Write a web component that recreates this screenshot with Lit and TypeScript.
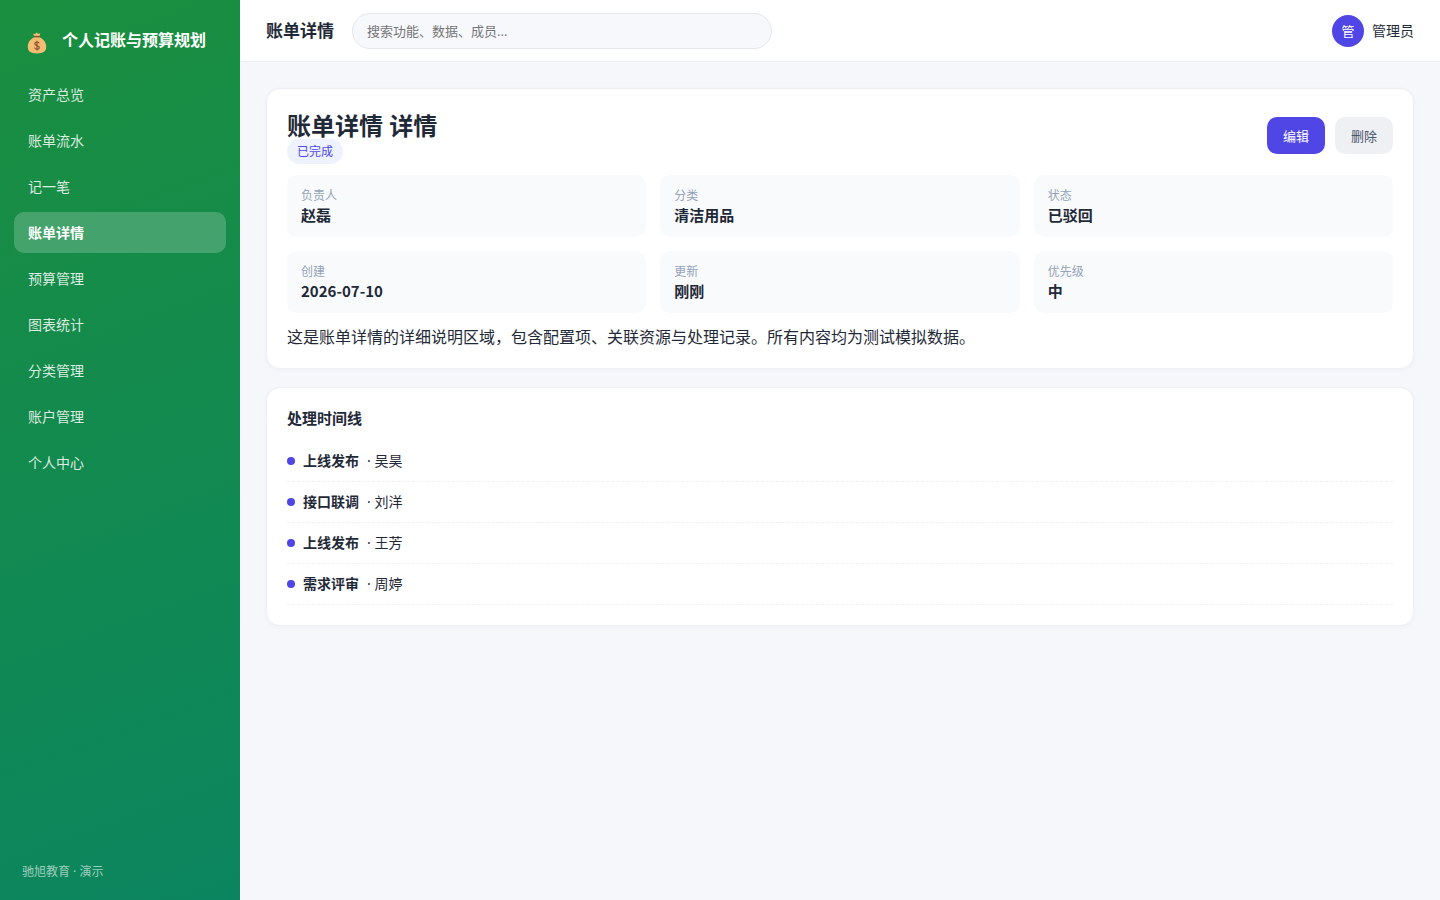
import { LitElement, html, css } from "lit";
import { customElement, state } from "lit/decorators.js";

const NAV = ["资产总览", "账单流水", "记一笔", "账单详情", "预算管理", "图表统计", "分类管理", "账户管理", "个人中心"];

const FIELDS = [
  { label: "负责人", value: "赵磊" },
  { label: "分类", value: "清洁用品" },
  { label: "状态", value: "已驳回" },
  { label: "创建", value: "2026-07-10" },
  { label: "更新", value: "刚刚" },
  { label: "优先级", value: "中" },
];

const TIMELINE = [
  { step: "上线发布", who: "吴昊" },
  { step: "接口联调", who: "刘洋" },
  { step: "上线发布", who: "王芳" },
  { step: "需求评审", who: "周婷" },
];

@customElement("app-root")
export class AppRoot extends LitElement {
  @state() private active = "账单详情";

  static styles = css`
    :host {
      display: flex;
      min-height: 100vh;
      background: #f5f7fb;
      color: #1f2937;
      font: 14px/20px "Noto Sans", "Noto Sans CJK SC", sans-serif;
    }
    * {
      box-sizing: border-box;
    }
    h1, h2, h3, p, dl, dd, ul {
      margin: 0;
      padding: 0;
    }
    .sidebar {
      flex: 0 0 240px;
      display: flex;
      flex-direction: column;
      padding: 20px 14px;
      color: #fff;
      background: linear-gradient(160deg, #1a8f3f, #0b855f);
    }
    .brand {
      display: flex;
      align-items: center;
      gap: 15px;
      height: 40px;
      margin-bottom: 14px;
      padding: 0 13px;
      font-size: 16px;
      font-weight: 700;
      white-space: nowrap;
    }
    .logo {
      flex: none;
      width: 20px;
      height: 22px;
      margin-top: 5px;
    }
    .nav {
      display: flex;
      flex-direction: column;
      gap: 5px;
    }
    .link {
      height: 41px;
      padding: 0 14px;
      border-radius: 10px;
      line-height: 42px;
      color: rgba(255, 255, 255, 0.85);
      text-decoration: none;
    }
    .link.active {
      background: rgba(255, 255, 255, 0.2);
      color: #fff;
      font-weight: 700;
    }
    .foot {
      margin-top: auto;
      padding: 0 8px;
      font-size: 12px;
      line-height: 16px;
      color: rgba(255, 255, 255, 0.6);
    }
    .page {
      flex: 1;
      min-width: 0;
    }
    .topbar {
      display: flex;
      align-items: center;
      gap: 18px;
      height: 62px;
      padding: 0 26px;
      background: #fff;
      border-bottom: 1px solid #eef0f4;
    }
    .topbar h1 {
      font-size: 17px;
      line-height: 24px;
      white-space: nowrap;
    }
    .search {
      flex: 0 1 420px;
      min-width: 0;
      height: 36px;
      padding: 0 14px;
      border: 1px solid #e5e7ef;
      border-radius: 18px;
      background: #f7f8fc;
      font: inherit;
      font-size: 13px;
      color: inherit;
    }
    .search::placeholder {
      color: #757575;
    }
    .user {
      display: flex;
      align-items: center;
      gap: 8px;
      margin-left: auto;
      white-space: nowrap;
    }
    .avatar {
      width: 32px;
      height: 32px;
      border-radius: 50%;
      background: #4f46e5;
      color: #fff;
      font-size: 13px;
      line-height: 32px;
      text-align: center;
    }
    .content {
      display: flex;
      flex-direction: column;
      gap: 18px;
      padding: 26px;
    }
    .card {
      padding: 20px;
      border: 1px solid #eef0f5;
      border-radius: 14px;
      background: #fff;
      box-shadow: 0 1px 4px rgba(30, 40, 80, 0.04);
    }
    .head {
      display: flex;
      align-items: center;
      justify-content: space-between;
      margin-bottom: 13px;
    }
    .head h2 {
      font-size: 24px;
      line-height: 33px;
    }
    .status {
      font-size: 12px;
      line-height: 20px;
    }
    .badge {
      padding: 4px 10px;
      border-radius: 999px;
      background: #eef2ff;
      color: #4f46e5;
    }
    .actions {
      display: flex;
      gap: 10px;
    }
    .btn {
      height: 37px;
      padding: 0 16px;
      border: 0;
      border-radius: 10px;
      background: #eef0f4;
      color: #475569;
      font: inherit;
      font-size: 13px;
    }
    .btn.primary {
      background: #4f46e5;
      color: #fff;
    }
    .fields {
      display: grid;
      grid-template-columns: repeat(3, 1fr);
      gap: 14px;
    }
    .field {
      padding: 12px 14px;
      border-radius: 10px;
      background: #f9fafc;
    }
    .field dt {
      font-size: 12px;
      line-height: 18px;
      color: #94a3b8;
    }
    .field dd {
      font-family: "Noto Sans CJK SC", sans-serif;
      font-size: 15px;
      line-height: 20px;
      font-weight: 700;
    }
    .desc {
      margin-top: 14px;
      font-size: 16px;
      line-height: 21px;
    }
    .card h3 {
      margin-bottom: 13px;
      font-size: 15px;
      line-height: 20px;
    }
    .timeline {
      list-style: none;
    }
    .event {
      display: flex;
      align-items: center;
      gap: 8px;
      padding: 10px 0;
      border-bottom: 1px dashed #eef0f4;
    }
    .dot {
      width: 8px;
      height: 8px;
      border-radius: 50%;
      background: #4f46e5;
    }
  `;

  private select(e: Event, name: string) {
    e.preventDefault();
    this.active = name;
  }

  render() {
    return html`
      <aside class="sidebar">
        <div class="brand">
          <svg class="logo" viewBox="0 0 20 22" aria-hidden="true">
            <path d="M6.200 1.800 8 1.900 9.600.6l1.700 1.200 2-.2-.7 2.800H7.200z" fill="#f5bd72" />
            <path d="M7.200 5.200h5.400c4 2 6.600 5.200 6.600 9.400 0 4.600-2.200 6.800-9.200 6.800s-9.200-2.200-9.200-6.800c0-4.200 2.400-7.400 6.400-9.400z" fill="#f5bd72" />
            <path d="M7 4.500h6" stroke="#8d5136" stroke-width="1.300" />
            <path d="M12.200 11.400c-.3-1-1.100-1.400-2.200-1.400-1.300 0-2.200.6-2.200 1.700 0 2.400 4.500 1.300 4.500 3.700 0 1.200-1 1.800-2.300 1.800s-2.200-.6-2.400-1.700M10 8.800v9.600" fill="none" stroke="#8d5136" stroke-width="1.200" />
          </svg>
          <span>个人记账与预算规划</span>
        </div>
        <nav class="nav">
          ${NAV.map(
            (n) => html`<a class="link ${n === this.active ? "active" : ""}" href="#" @click=${(e: Event) => this.select(e, n)}>${n}</a>`
          )}
        </nav>
        <div class="foot">驰旭教育 · 演示</div>
      </aside>
      <div class="page">
        <header class="topbar">
          <h1>账单详情</h1>
          <input class="search" type="search" aria-label="搜索" placeholder="搜索功能、数据、成员..." />
          <div class="user">
            <span class="avatar">管</span>
            <span>管理员</span>
          </div>
        </header>
        <main class="content">
          <section class="card">
            <div class="head">
              <div>
                <h2>账单详情 详情</h2>
                <div class="status"><span class="badge">已完成</span></div>
              </div>
              <div class="actions">
                <button class="btn primary" type="button">编辑</button>
                <button class="btn" type="button">删除</button>
              </div>
            </div>
            <dl class="fields">
              ${FIELDS.map((f) => html`<div class="field"><dt>${f.label}</dt><dd>${f.value}</dd></div>`)}
            </dl>
            <p class="desc">这是账单详情的详细说明区域，包含配置项、关联资源与处理记录。所有内容均为测试模拟数据。</p>
          </section>
          <section class="card">
            <h3>处理时间线</h3>
            <ul class="timeline">
              ${TIMELINE.map(
                (t) => html`<li class="event"><span class="dot"></span><b>${t.step}</b><span>· ${t.who}</span></li>`
              )}
            </ul>
          </section>
        </main>
      </div>
    `;
  }
}
